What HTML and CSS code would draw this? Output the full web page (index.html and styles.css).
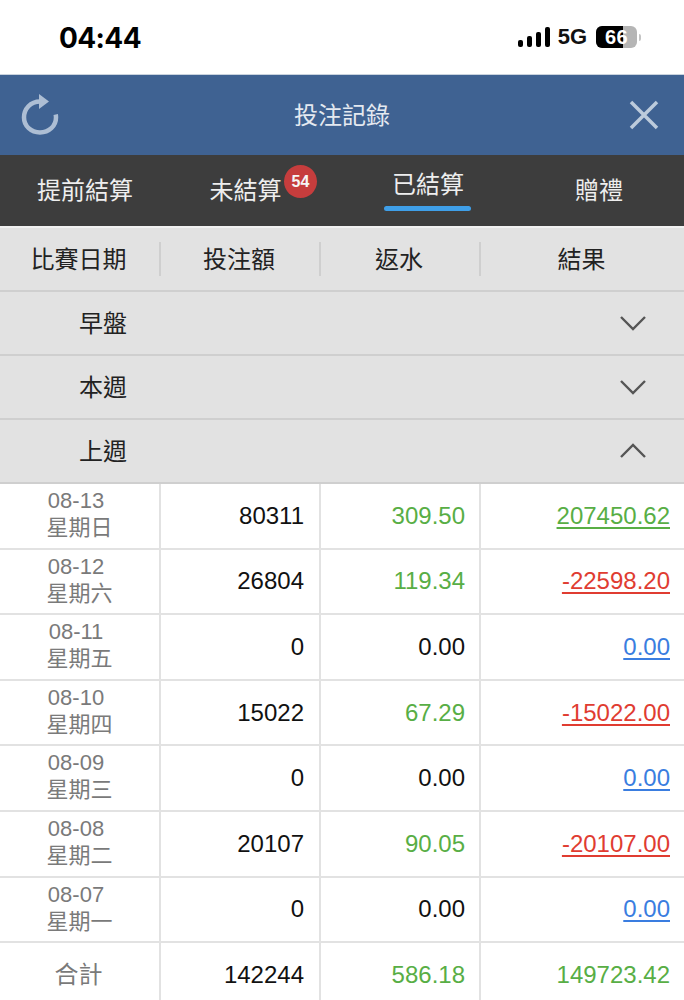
FILE: index.html
```html
<!DOCTYPE html>
<html lang="zh-Hant">
<head>
<meta charset="utf-8">
<title>投注記錄</title>
<link rel="stylesheet" href="styles.css">
</head>
<body>
<div class="status">
  <span class="time">04:44</span>
  <div class="status-right">
    <svg class="signal" width="32" height="20" viewBox="0 0 32 20"><rect x="0" y="13" width="5" height="7" rx="2"/><rect x="9" y="9" width="5" height="11" rx="2"/><rect x="18" y="5" width="5" height="15" rx="2"/><rect x="27" y="0" width="5" height="20" rx="2"/></svg>
    <span class="net">5G</span>
    <div class="battery"><div class="batt-level"></div><span class="batt-text">66</span></div>
    <div class="batt-tip"></div>
  </div>
</div>
<header class="head">
  <svg class="icon-refresh" width="38" height="42" viewBox="0 0 38 42"><path d="M19 8.500C9.500 8.500 3 16 3 24.500C3 33 10 39.500 19 39.500C28 39.500 35 33 35 24.500C35 23.500 34.900 22.500 34.700 21.500" fill="none" stroke="#adbed4" stroke-width="4.500"/><path d="M18 1L28 8.500L18 16Z" fill="#adbed4"/></svg>
  <h1 class="head-title">投注記錄</h1>
  <svg class="icon-close" width="30" height="30" viewBox="0 0 30 30"><path d="M2 2L28 28M28 2L2 28" stroke="#bccbdc" stroke-width="3.500" fill="none"/></svg>
</header>
<nav class="tabs">
  <div class="tab tab-1">提前結算</div>
  <div class="tab tab-2">未結算<span class="badge">54</span></div>
  <div class="tab tab-3">已結算</div>
  <div class="tab tab-4">贈禮</div>
</nav>
<div class="cols">
  <div class="col">比賽日期</div>
  <div class="col">投注額</div>
  <div class="col">返水</div>
  <div class="col col-last">結果</div>
</div>
<div class="group"><span>早盤</span><svg width="26" height="16" viewBox="0 0 26 16"><path d="M1 2L13 14L25 2" fill="none" stroke="#555" stroke-width="2.400"/></svg></div>
<div class="group"><span>本週</span><svg width="26" height="16" viewBox="0 0 26 16"><path d="M1 2L13 14L25 2" fill="none" stroke="#555" stroke-width="2.400"/></svg></div>
<div class="group"><span>上週</span><svg width="26" height="16" viewBox="0 0 26 16"><path d="M1 14L13 2L25 14" fill="none" stroke="#555" stroke-width="2.400"/></svg></div>
<div class="table">
  <div class="row"><div class="c date"><span class="day">08-13</span>星期日</div><div class="c">80311</div><div class="c green">309.50</div><div class="c"><a class="green">207450.62</a></div></div>
  <div class="row"><div class="c date"><span class="day">08-12</span>星期六</div><div class="c">26804</div><div class="c green">119.34</div><div class="c"><a class="red">-22598.20</a></div></div>
  <div class="row"><div class="c date"><span class="day">08-11</span>星期五</div><div class="c">0</div><div class="c">0.00</div><div class="c"><a class="blue">0.00</a></div></div>
  <div class="row"><div class="c date"><span class="day">08-10</span>星期四</div><div class="c">15022</div><div class="c green">67.29</div><div class="c"><a class="red">-15022.00</a></div></div>
  <div class="row"><div class="c date"><span class="day">08-09</span>星期三</div><div class="c">0</div><div class="c">0.00</div><div class="c"><a class="blue">0.00</a></div></div>
  <div class="row"><div class="c date"><span class="day">08-08</span>星期二</div><div class="c">20107</div><div class="c green">90.05</div><div class="c"><a class="red">-20107.00</a></div></div>
  <div class="row"><div class="c date"><span class="day">08-07</span>星期一</div><div class="c">0</div><div class="c">0.00</div><div class="c"><a class="blue">0.00</a></div></div>
  <div class="row"><div class="c total">合計</div><div class="c">142244</div><div class="c green">586.18</div><div class="c green">149723.42</div></div>
</div>
</body>
</html>
```
FILE: styles.css
```css
* { box-sizing: border-box; }
html, body { margin: 0; padding: 0; }
body {
  width: 684px;
  height: 1000px;
  overflow: hidden;
  background: #fff;
  color: #111;
  font-family: "Liberation Sans", "Noto Sans CJK TC", sans-serif;
  font-size: 24px;
}
.status {
  height: 75px;
  padding: 0 43px 0 59px;
  display: flex;
  align-items: center;
  justify-content: space-between;
  background: #fff;
  border-bottom: 1px solid #c9d3de;
}
.time { font-size: 28px; font-weight: 700; letter-spacing: -0.6px; color: #000; padding-top: 2px; font-family: "Inter", "Liberation Sans", sans-serif; }
.status-right { display: flex; align-items: center; }
.signal { fill: #000; margin-right: 8px; }
.net { font-size: 22px; font-weight: 700; color: #111; margin-right: 9px; }
.battery {
  position: relative;
  width: 41px;
  height: 22px;
  border-radius: 6px;
  background: #b5b5b5;
  overflow: hidden;
  display: flex;
  align-items: center;
  justify-content: center;
}
.batt-level { position: absolute; left: 0; top: 0; bottom: 0; width: 27px; background: #000; }
.batt-text { position: relative; font-size: 20px; font-weight: 700; color: #fff; letter-spacing: 0.5px; }
.batt-tip { width: 2px; height: 7px; margin-left: 2px; border-radius: 0 2px 2px 0; background: #c4c4c4; }
.head {
  height: 80px;
  background: #3f6292;
  display: flex;
  align-items: center;
  justify-content: space-between;
  position: relative;
  padding: 0 25px 0 21px;
}
.head-title {
  margin: -4px 0 0;
  position: absolute;
  left: 0;
  right: 0;
  text-align: center;
  font-size: 24px;
  font-weight: 400;
  color: #e4e9f0;
}
.icon-refresh { margin-top: -2px; }
.tabs {
  height: 71px;
  background: #3d3d3d;
  display: grid;
  grid-template-columns: 170px 172px 172px 170px;
  color: #eeeeee;
  font-weight: 400;
}
.tab { display: flex; justify-content: center; align-items: center; position: relative; padding-bottom: 4px; font-size: 24px; }
.tab-2 { padding-right: 21px; }
.tab-3 { padding-bottom: 16px; }
.tab-3::after {
  content: "";
  position: absolute;
  left: 42px;
  width: 87px;
  bottom: 15px;
  height: 5px;
  border-radius: 2.500px;
  background: #3f9fe8;
}
.badge {
  position: absolute;
  left: 114px;
  top: 10px;
  width: 33px;
  height: 33px;
  border-radius: 50%;
  background: #c63d3d;
  color: #f5f5f5;
  font-size: 16px;
  font-weight: 700;
  display: flex;
  align-items: center;
  justify-content: center;
}
.cols {
  height: 66px;
  background: #e2e2e2;
  border-top: 2px solid #f0f0f0;
  border-bottom: 2px solid #cfcfcf;
  display: grid;
  grid-template-columns: 161px 160px 160px 203px;
  align-items: center;
  color: #222;
  font-weight: 400;
}
.col {
  height: 34px;
  padding: 0 2px 4px 0;
  display: flex;
  align-items: center;
  justify-content: center;
  border-right: 2px solid #cfcfcf;
  font-size: 24px;
}
.col-last { border-right: 0; }
.group {
  height: 64px;
  background: #e2e2e2;
  border-bottom: 2px solid #cfcfcf;
  display: flex;
  align-items: center;
  justify-content: space-between;
  padding: 0 38px 0 79px;
  color: #222;
  font-weight: 400;
}
.group span { padding-bottom: 4px; }
.table { background: #fff; }
.row {
  height: 65.6px;
  display: grid;
  grid-template-columns: 161px 160px 160px 203px;
  border-bottom: 2px solid #e2e2e2;
}
.c {
  display: flex;
  align-items: center;
  justify-content: flex-end;
  padding-right: 14px;
  border-right: 2px solid #e2e2e2;
  font-size: 24px;
}
.c:nth-child(2) { padding-right: 15px; }
.c:last-child { border-right: 0; }
.date {
  display: block;
  padding: 3px 0 0 0;
  text-align: center;
  font-size: 22px;
  line-height: 27px;
  color: #7a7a7a;
  font-weight: 400;
}
.day { display: block; padding-right: 7px; }
.total { justify-content: center; padding: 0 2px 4px 0; color: #7a7a7a; font-weight: 400; }
.green { color: #58ae45; }
.red { color: #e03c31; }
.blue { color: #3a7de0; }
a { text-decoration: underline; text-decoration-thickness: 1.500px; text-underline-offset: 3px; }
```
